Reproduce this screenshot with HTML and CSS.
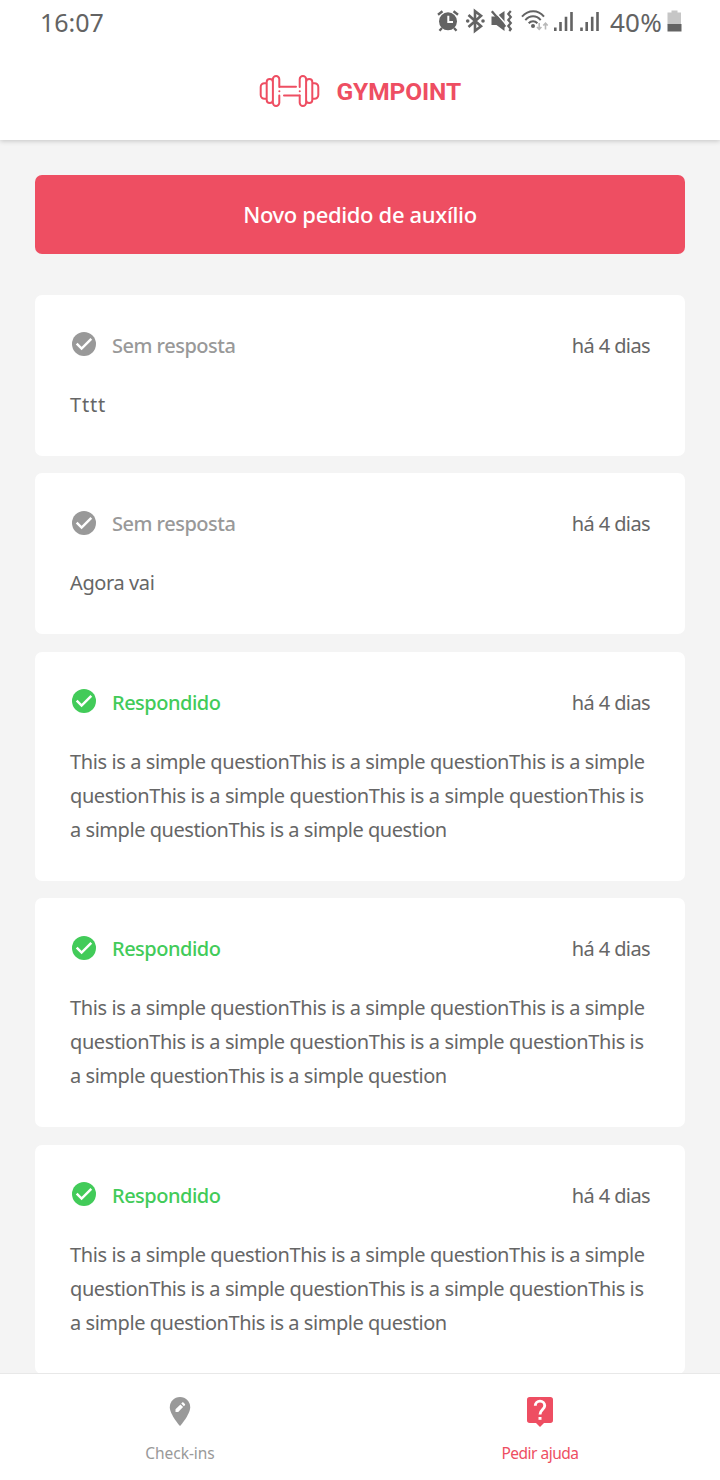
FILE: index.html
```html
<!DOCTYPE html>
<html lang="pt-BR">
<head>
<meta charset="utf-8">
<title>Gympoint</title>
<link rel="stylesheet" href="styles.css">
</head>
<body>
<svg class="defs" width="0" height="0">
  <symbol id="check" viewBox="0 0 24 24">
    <circle cx="12" cy="12" r="12"/>
    <path d="M4.700 11.700l4.900 4.900 9.700-9.800" fill="none" stroke="#fff" stroke-width="2.500"/>
  </symbol>
</svg>
<div class="screen">
  <header class="top">
    <div class="status">
      <span class="clock">16:07</span>
      <div class="status-icons">
        <svg width="246" height="28" viewBox="436 8 246 28">
          <g fill="#636363">
            <circle cx="448" cy="21.300" r="9"/>
            <path d="M442 28l-2.500 2.700M454 28l2.500 2.700M438 14.800l4.500-3.500M458 14.800l-4.500-3.500" stroke="#636363" stroke-width="2.400"/>
            <path d="M448.300 15.800v6.200h4.700" fill="none" stroke="#fff" stroke-width="2"/>
            <path d="M468.500 15l12.500 11.200-6 4.600V11.200l6 4.600L468.500 27" fill="none" stroke="#636363" stroke-width="2.600"/>
            <circle cx="467.700" cy="21" r="1.800"/><circle cx="483" cy="21" r="1.800"/>
            <path d="M491.500 16.500h5l8-5.500v20l-8-6h-5z"/>
            <path d="M493.800 10.500l12.500 14" stroke="#fff" stroke-width="1.600"/>
            <path d="M491.800 11.200l13.500 15.500" stroke="#636363" stroke-width="2.300"/>
            <path d="M510.800 11l-2.500 3 2.500 3-2.500 3 2.500 3-2.500 3 2.500 3-1.500 2" fill="none" stroke="#636363" stroke-width="2.200"/>
            <path d="M522 16.700c6.500-7.200 16-7.200 22 0M525.300 20.100c4.600-5 11-5 15.400 0M528.700 23.300c2.500-2.600 6.200-2.600 8.700 0" fill="none" stroke="#636363" stroke-width="2"/>
            <circle cx="533" cy="26" r="2"/>
            <path d="M539.200 23v6M537 27l2.200 2.300 2.200-2.300M545.500 29.500v-6M543.300 25.500l2.200-2.300 2.200 2.300" fill="none" stroke="#b8b8b8" stroke-width="1.600"/>
            <path d="M554 27.500h2.600v3.500h-2.600zM559.200 22h2.600v9h-2.600zM564.700 16.800h2.600v14.200h-2.600zM570.200 12h2.600v19h-2.600zM580.200 27.500h2.600v3.500h-2.600zM585.400 22h2.600v9h-2.600zM590.900 16.800h2.600v14.200h-2.600zM596.200 12h2.600v19h-2.600z"/>
          </g>
          <path d="M671.500 10.500h6v2h3.500v12h-13.500v-12h4z" fill="#c6c6c6"/>
          <path d="M667.500 24h14v7.500h-14z" fill="#636363"/>
        </svg>
        <span class="battery">40%</span>
      </div>
    </div>
    <div class="brand">
      <svg class="dumbbell" width="61" height="32" viewBox="0 0 61 32" fill="none" stroke="currentColor" stroke-width="2" stroke-linecap="round">
        <path d="M20.300 12V4.300a3.200 3.200 0 0 0-6.400 0v23.400a3.200 3.200 0 0 0 6.400 0V20.500M13.900 7a3 3 0 0 0-6.200 0v18a3 3 0 0 0 6.200 0M7.700 8.200H5.500a3.800 3.800 0 0 0-3.800 3.800v8a3.800 3.800 0 0 0 3.800 3.800h2.200"/>
        <path d="M40.700 12V4.300a3.200 3.200 0 0 1 6.400 0v23.400a3.200 3.200 0 0 1-6.400 0V20.500M47.100 7a3 3 0 0 1 6.200 0v18a3 3 0 0 1-6.200 0M53.300 8.200h2.200a3.800 3.800 0 0 1 3.800 3.800v8a3.800 3.800 0 0 1-3.800 3.800h-2.200"/>
        <path d="M21 11.700h16M25 20.500h15.500M20.300 16.200h.1M40.700 16.200h.1"/>
      </svg>
      <span class="brand-name">GYMPOINT</span>
    </div>
  </header>
  <main class="content">
    <button class="new-order"><span>Novo pedido de auxílio</span></button>
    <section class="card">
      <div class="card-head"><svg class="check"><use href="#check"/></svg><span class="label">Sem resposta</span><span class="time">há 4 dias</span></div>
      <p class="question short">Tttt</p>
    </section>
    <section class="card">
      <div class="card-head"><svg class="check"><use href="#check"/></svg><span class="label">Sem resposta</span><span class="time">há 4 dias</span></div>
      <p class="question">Agora vai</p>
    </section>
    <section class="card answered">
      <div class="card-head"><svg class="check"><use href="#check"/></svg><span class="label">Respondido</span><span class="time">há 4 dias</span></div>
      <p class="question">This is a simple questionThis is a simple questionThis is a simple<br>questionThis is a simple questionThis is a simple questionThis is<br><span class="last">a simple questionThis is a simple question</span></p>
    </section>
    <section class="card answered">
      <div class="card-head"><svg class="check"><use href="#check"/></svg><span class="label">Respondido</span><span class="time">há 4 dias</span></div>
      <p class="question">This is a simple questionThis is a simple questionThis is a simple<br>questionThis is a simple questionThis is a simple questionThis is<br><span class="last">a simple questionThis is a simple question</span></p>
    </section>
    <section class="card answered">
      <div class="card-head"><svg class="check"><use href="#check"/></svg><span class="label">Respondido</span><span class="time">há 4 dias</span></div>
      <p class="question">This is a simple questionThis is a simple questionThis is a simple<br>questionThis is a simple questionThis is a simple questionThis is<br><span class="last">a simple questionThis is a simple question</span></p>
    </section>
  </main>
  <nav class="tabs">
    <div class="tab">
      <svg width="40" height="34" viewBox="0 0 40 34">
        <path d="M20 2C14.200 2 9.800 6.500 9.800 12.200 9.800 19.500 20 31 20 31s10.200-11.500 10.200-18.800C30.200 6.500 25.800 2 20 2z" fill="#999"/>
        <path d="M15.500 14.300v2.700h2.700l4.900-4.900-2.700-2.700zM21.200 8.600l2.700 2.700 1-1c.4-.4.4-.8 0-1.200l-1.500-1.500c-.4-.4-.8-.4-1.200 0z" fill="#fff"/>
      </svg>
      <span class="tab-name">Check-ins</span>
    </div>
    <div class="tab active">
      <svg width="40" height="34" viewBox="0 0 40 34">
        <path d="M9.700 2h20.600a2.700 2.700 0 0 1 2.700 2.700v20.600a2.700 2.700 0 0 1-2.700 2.700H24l-4 4-4-4H9.700A2.700 2.700 0 0 1 7 25.300V4.700A2.700 2.700 0 0 1 9.700 2z" fill="currentColor"/>
        <path d="M15.300 10.800a4.700 4.700 0 0 1 9.400 0c0 3.600-4.700 4-4.700 8.600" fill="none" stroke="#fff" stroke-width="2.900"/>
        <path d="M18.500 22h3v2.800h-3z" fill="#fff"/>
      </svg>
      <span class="tab-name">Pedir ajuda</span>
    </div>
  </nav>
</div>
</body>
</html>
```
FILE: styles.css
```css
* { box-sizing: border-box; }
body { margin: 0; font-family: "Noto Sans", sans-serif; color: #666; background: #f4f4f4; }
.defs { display: block; }
.screen { width: 720px; height: 1480px; overflow: hidden; display: flex; flex-direction: column; }
.top { flex: none; height: 140px; background: #fff; box-shadow: 0 1px 5px rgba(0,0,0,.2); z-index: 1; }
.status { height: 44px; padding: 0 38px 0 40px; display: flex; justify-content: space-between; align-items: center; }
.clock { font-size: 25px; line-height: 34px; margin-bottom: 1px; color: #636363; }
.status-icons { display: grid; }
.status-icons > * { grid-area: 1 / 1; align-self: center; }
.battery { font-size: 26px; line-height: 34px; margin-bottom: 1px; color: #636363; letter-spacing: .2px; justify-self: end; margin-right: 20px; }
.brand { height: 94px; display: flex; justify-content: center; align-items: center; gap: 16.5px; color: #ee4e62; }
.brand-name { font: 700 24.5px/32px Roboto, sans-serif; letter-spacing: -.1px; padding-top: 2px; }
.content { flex: 1; min-height: 0; overflow: hidden; padding: 35px 35px 0; display: flex; flex-direction: column; gap: 17.45px; }
.new-order { flex: none; height: 79px; margin: 0 0 23.55px; padding: 0 0 2px; border: 0; border-radius: 7px; background: #ee4e62; color: #fff; font: 500 22px "Noto Sans", sans-serif; letter-spacing: -.34px; }
.card { flex: none; padding: 35px 35px 34px; border-radius: 7px; background: #fff; color: #999; }
.answered { color: #42cb59; }
.card-head { height: 32px; margin-bottom: 26px; display: flex; align-items: center; }
.check { width: 24px; height: 24px; margin: 0 16px 3px 2px; fill: currentColor; }
.label { font-size: 20px; line-height: 30px; font-weight: 500; letter-spacing: -.5px; }
.time { margin-left: auto; font-size: 20px; line-height: 30px; letter-spacing: -.6px; color: #666; }
.question { margin: 0; font-size: 20px; line-height: 34px; letter-spacing: -.4px; color: #666; white-space: nowrap; }
.last { letter-spacing: -.45px; }
.short { letter-spacing: .8px; }
.tabs { flex: none; height: 107px; border-top: 1px solid #e8e8e8; background: #fff; display: grid; grid-template-columns: 1fr 1fr; }
.tab { display: flex; flex-direction: column; align-items: center; padding-top: 21px; gap: 14px; color: #999; font-size: 15.5px; line-height: 20px; }
.tab-name { letter-spacing: -.05px; }
.active { color: #ee4e62; }
.active .tab-name { letter-spacing: -.5px; }
```
